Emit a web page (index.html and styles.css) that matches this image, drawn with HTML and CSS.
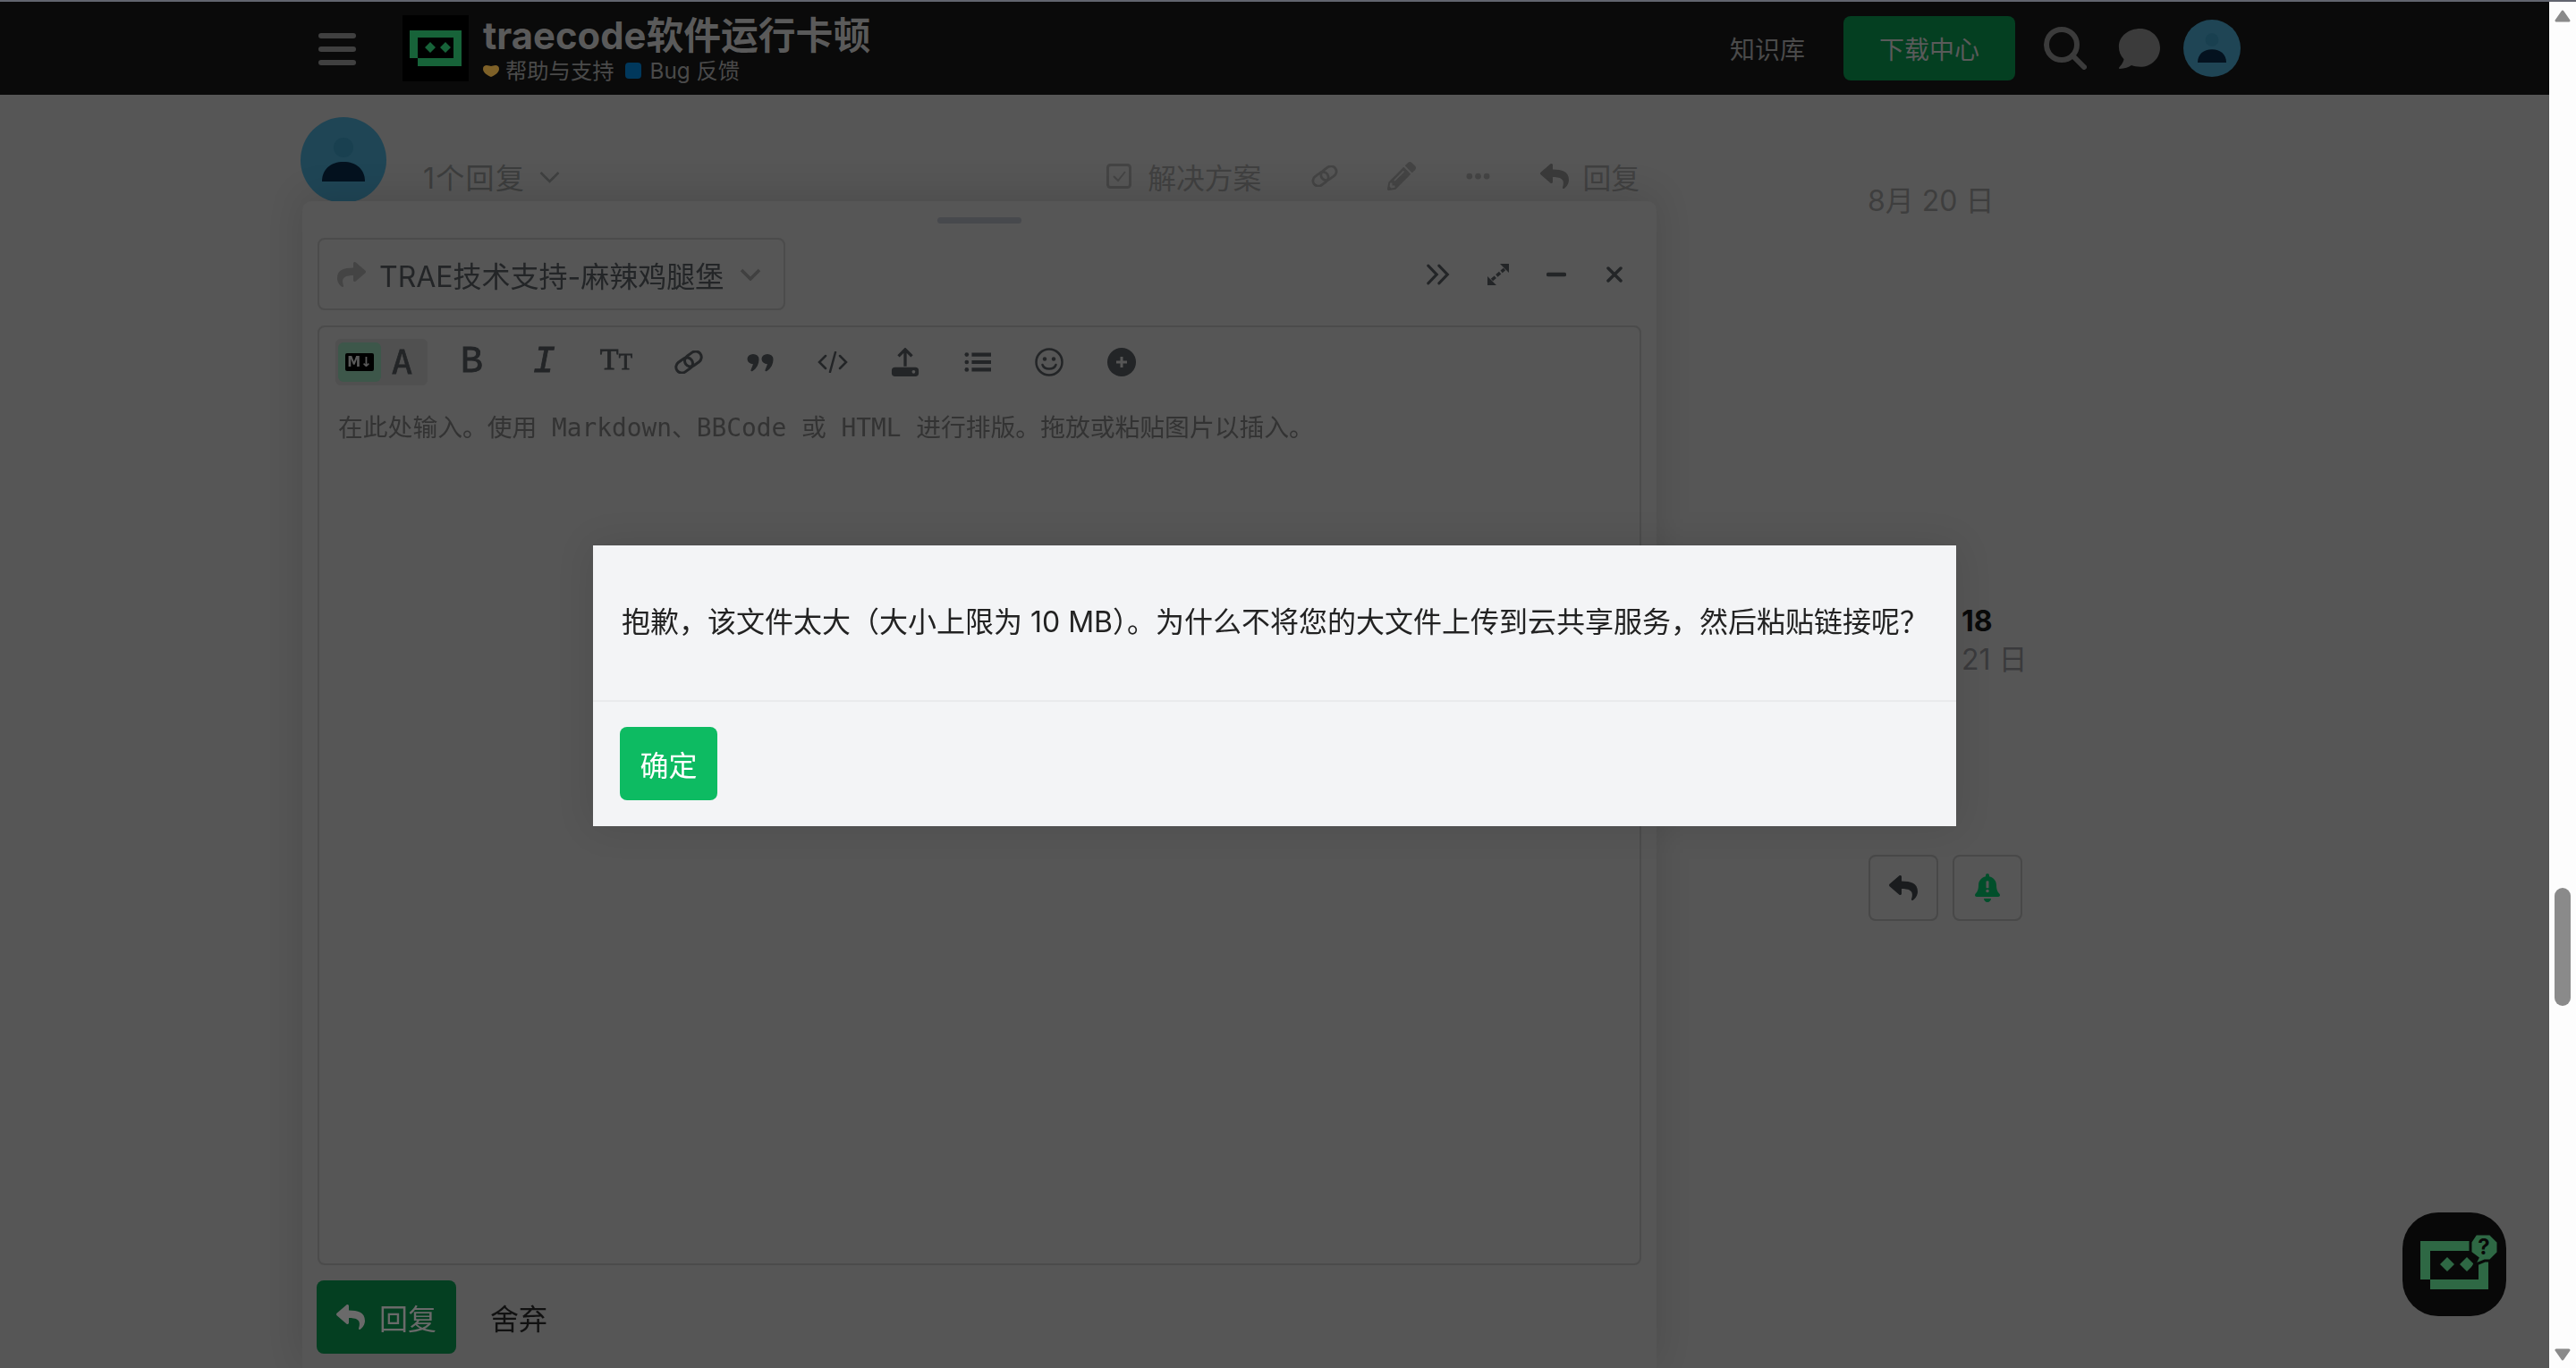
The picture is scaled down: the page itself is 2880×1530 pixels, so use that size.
FILE: index.html
```html
<!DOCTYPE html>
<html lang="zh-CN">
<head>
  <meta charset="UTF-8" />
  <title>traecode软件运行卡顿</title>
  <link rel="stylesheet" href="styles.css">
</head>
<body>
  <svg class="sprite" xmlns="http://www.w3.org/2000/svg">
    <symbol id="i-reply" viewBox="0 0 512 512"><path fill="currentColor" d="M8.309 189.836L184.313 37.851C199.719 24.546 224 35.347 224 56.015v80.053c160.629 1.839 288 34.032 288 186.258 0 61.441-39.581 122.309-83.333 154.132-13.653 9.931-33.111-2.533-28.077-18.631 45.344-145.012-21.507-183.51-176.59-185.742V360c0 20.7-24.3 31.453-39.687 18.164l-176.004-152c-11.071-9.562-11.086-26.753 0-36.328z"/></symbol>
    <symbol id="i-link" viewBox="0 0 32 26"><g transform="rotate(-36 16 13)" fill="none" stroke="currentColor" stroke-width="3"><rect x="0" y="6.500" width="20" height="13" rx="6.500"/><rect x="12" y="6.500" width="20" height="13" rx="6.500"/></g></symbol>
    <symbol id="i-person" viewBox="0 0 96 96"><circle cx="48" cy="34" r="11" fill="#194050"/><path d="M24 72c0-14 10-22 24-22s24 8 24 22z" fill="#04121f"/></symbol>
  </svg>

  <div class="top-line"></div>
  <div class="window">
    <div class="page">
      <header class="site-header">
        <div class="hamburger"><span></span><span></span><span></span></div>
        <svg class="logo" viewBox="0 0 74 74">
          <rect width="74" height="74" fill="#000"/>
          <path fill="#176339" fill-rule="evenodd" d="M8 17H66V57H17V48H8ZM17 25V48H57V25Z"/>
          <path fill="#176339" d="M31 30l6 6-6 6-6-6zM48 30l6 6-6 6-6-6z"/>
        </svg>
        <div class="topic">
          <div class="topic-title">traecode软件运行卡顿</div>
          <div class="topic-crumbs">
            <svg class="crumb-heart" viewBox="0 0 18 14"><path fill="#7e6128" d="M9 14C4 12 0 9 0 5c0-3 2-4 4-4 2 0 4 1 5 1s3-1 5-1c2 0 4 1 4 4 0 4-4 7-9 9z"/></svg>
            <span>帮助与支持</span>
            <i class="crumb-square"></i>
            <span>Bug 反馈</span>
          </div>
        </div>
        <nav class="header-nav">
          <a class="nav-link">知识库</a>
          <a class="nav-btn">下载中心</a>
          <svg class="nav-search" viewBox="0 0 48 48"><circle cx="20" cy="20" r="17" fill="none" stroke="#3b3b3b" stroke-width="6"/><path d="M32 32l13 13" stroke="#3b3b3b" stroke-width="6" stroke-linecap="round"/></svg>
          <svg class="nav-chat" viewBox="0 0 512 480"><path fill="#3b3b3b" d="M276 0C136 0 20 90 20 215c0 60 22 110 60 150C74 410 30 455 22 465c-4 6 0 15 8 15 60 0 110-20 140-42 32 12 68 18 106 18 130 0 236-102 236-228S406 0 276 0z"/></svg>
          <div class="avatar avatar-small"><svg viewBox="0 0 96 96"><use href="#i-person"/></svg></div>
        </nav>
      </header>

      <main class="topic-body">
        <section class="post-row">
          <div class="avatar"><svg viewBox="0 0 96 96"><use href="#i-person"/></svg></div>
          <div class="post-actions">
            <span class="replies">1个回复</span>
            <svg class="replies-caret" viewBox="0 0 24 14"><path d="M2 2l10 10L22 2" fill="none" stroke="#3f4040" stroke-width="2.500"/></svg>
            <div class="action-list">
              <svg class="act-check" viewBox="0 0 28 28"><rect x="1.500" y="1.500" width="25" height="25" rx="3" fill="none" stroke="#444" stroke-width="3"/><path d="M8 14l5 5 8-10" fill="none" stroke="#444" stroke-width="2"/></svg>
              <span class="act-label">解决方案</span>
              <svg class="act-link"><use href="#i-link"/></svg>
              <svg class="act-pencil" viewBox="0 0 512 512"><path fill="#444" d="M497.900 142.100l-46.100 46.100c-4.700 4.700-12.300 4.700-17 0l-111-111c-4.700-4.700-4.700-12.300 0-17l46.100-46.100c18.700-18.700 49.100-18.700 67.900 0l60.100 60.100c18.800 18.700 18.800 49.100 0 67.900zM284.200 99.800L21.600 362.400.4 483.900c-2.900 16.400 11.400 30.600 27.800 27.800l121.500-21.300 262.600-262.600c4.700-4.700 4.700-12.300 0-17l-111-111c-4.800-4.700-12.400-4.700-17.100 0zM124.100 339.900c-5.500-5.500-5.500-14.300 0-19.800l154-154c5.500-5.500 14.300-5.500 19.800 0s5.500 14.300 0 19.800l-154 154c-5.500 5.500-14.300 5.500-19.800 0zM88 424h48v36.300l-64.500 11.300-31.100-31.100L51.700 376H88v48z"/></svg>
              <svg class="act-dots" viewBox="0 0 28 8"><circle cx="4" cy="4" r="3.500" fill="#444"/><circle cx="14" cy="4" r="3.500" fill="#444"/><circle cx="24" cy="4" r="3.500" fill="#444"/></svg>
              <svg class="act-reply"><use href="#i-reply"/></svg>
              <span class="act-label act-label-reply">回复</span>
            </div>
          </div>
        </section>

        <aside class="timeline">
          <div class="tl-date">8月 20 日</div>
          <div class="tl-count">18</div>
          <div class="tl-last">21 日</div>
          <div class="tl-buttons">
            <button class="tl-btn"><svg class="tl-reply"><use href="#i-reply"/></svg></button>
            <button class="tl-btn">
              <svg class="tl-bell" viewBox="0 0 448 512"><path fill="#014f2b" d="M224 512c35.320 0 63.970-28.650 63.970-64H160.030c0 35.350 28.650 64 63.970 64zm215.390-149.710c-19.320-20.760-55.470-51.990-55.470-154.290 0-77.700-54.480-139.900-127.940-155.160V32c0-17.670-14.320-32-31.980-32s-31.980 14.330-31.980 32v20.840C118.560 68.100 64.080 130.300 64.080 208c0 102.300-36.150 133.530-55.470 154.290-6 6.450-8.660 14.160-8.610 21.710.11 16.400 12.980 32 32.100 32h383.800c19.120 0 32-15.600 32.100-32 .05-7.550-2.610-15.270-8.610-21.710z"/><rect x="200" y="130" width="48" height="130" rx="14" fill="#565656"/><circle cx="224" cy="310" r="28" fill="#565656"/></svg>
            </button>
          </div>
        </aside>
      </main>

      <section class="composer">
        <div class="grip"></div>
        <div class="composer-top">
          <div class="reply-to">
            <svg class="share-icon"><use href="#i-reply"/></svg>
            <span>TRAE技术支持-麻辣鸡腿堡</span>
            <svg class="reply-caret" viewBox="0 0 24 14"><path d="M2 2l10 10L22 2" fill="none" stroke="#404040" stroke-width="3.500"/></svg>
          </div>
          <div class="composer-controls">
            <svg class="ctl" viewBox="0 0 28 24"><path d="M2 1.500l10 10.500L2 22.500M15 1.500l10 10.500-10 10.500" fill="none" stroke="#232527" stroke-width="3.500" stroke-linecap="round"/></svg>
            <svg class="ctl" viewBox="0 0 26 24"><path d="M15 0h10v10zM1 24V14l10 10z" fill="#232527"/><path d="M6 18l14-12" stroke="#232527" stroke-width="3.500" stroke-dasharray="5 2"/></svg>
            <svg class="ctl ctl-min" viewBox="0 0 22 6"><path d="M2 3h18" stroke="#232527" stroke-width="4.500" stroke-linecap="round"/></svg>
            <svg class="ctl ctl-x" viewBox="0 0 18 18"><path d="M2 2l14 14M16 2L2 16" stroke="#232527" stroke-width="3.500" stroke-linecap="round"/></svg>
          </div>
        </div>

        <div class="editor">
          <div class="toolbar">
            <div class="mode-toggle">
              <div class="mode-md"><span class="md-mark">M↓</span></div>
              <span class="mode-a">A</span>
            </div>
            <span class="tool tool-b">B</span>
            <span class="tool tool-i">I</span>
            <span class="tool tool-t">T<small>T</small></span>
            <span class="tool"><svg class="tool-link"><use href="#i-link"/></svg></span>
            <span class="tool"><svg class="tool-svg tool-quote" viewBox="0 0 30 24" preserveAspectRatio="none"><path d="M7 1a6.500 6.500 0 0 1 6.500 6.500C13.500 14 11 20 6 23c-1 .5-2-.5-1.500-1.500L7 14A6.500 6.500 0 0 1 7 1zM23 1a6.500 6.500 0 0 1 6.500 6.500C29.500 14 27 20 22 23c-1 .5-2-.5-1.500-1.500L23 14A6.500 6.500 0 0 1 23 1z" fill="#232527"/></svg></span>
            <span class="tool"><svg class="tool-svg tool-code" viewBox="0 0 34 24"><path d="M9 5l-7 7 7 7M25 5l7 7-7 7M20 1l-6 22" fill="none" stroke="#232527" stroke-width="2.500" stroke-linecap="round"/></svg></span>
            <span class="tool"><svg class="tool-svg tool-upload" viewBox="0 0 32 34"><path d="M16 22V3M8 10l8-8 8 8" fill="none" stroke="#232527" stroke-width="3.500"/><rect y="23" width="32" height="11" rx="4" fill="#232527"/><circle cx="26" cy="28.500" r="2" fill="#565656"/></svg></span>
            <span class="tool"><svg class="tool-svg" viewBox="0 0 32 24"><path d="M9 3h23M9 12h23M9 21h23" stroke="#232527" stroke-width="4.500"/><circle cx="3" cy="3" r="2.500" fill="#232527"/><circle cx="3" cy="12" r="2.500" fill="#232527"/><circle cx="3" cy="21" r="2.500" fill="#232527"/></svg></span>
            <span class="tool"><svg class="tool-svg tool-round" viewBox="0 0 32 32"><circle cx="16" cy="16" r="14.500" fill="none" stroke="#232527" stroke-width="2.500"/><circle cx="11" cy="12.500" r="2.200" fill="#232527"/><circle cx="21" cy="12.500" r="2.200" fill="#232527"/><path d="M8.500 19c2 6 13 6 15 0" fill="none" stroke="#232527" stroke-width="2.500" stroke-linecap="round"/></svg></span>
            <span class="tool"><svg class="tool-svg tool-round" viewBox="0 0 32 32"><circle cx="16" cy="16" r="16" fill="#232527"/><path d="M16 10v12M10 16h12" stroke="#565656" stroke-width="3"/></svg></span>
          </div>
          <div class="placeholder">在此处输入。使用 Markdown、BBCode 或 HTML 进行排版。拖放或粘贴图片以插入。</div>
        </div>

        <div class="composer-footer">
          <button class="btn-reply"><svg class="btn-reply-icon"><use href="#i-reply"/></svg>回复</button>
          <a class="discard">舍弃</a>
        </div>
      </section>

      <button class="help-fab">
        <svg viewBox="0 0 116 116">
          <path fill="#2e6844" fill-rule="evenodd" d="M20 32H96V86H31V75H20ZM31 43V75H85V43Z"/>
          <path fill="#2e6844" d="M50 50l8 8-8 8-8-8zM72 50l8 8-8 8-8-8z"/>
          <path fill="#2e6844" stroke="#080808" stroke-width="3" d="M82 24h16l9 9v12l-9 9H92l-12 5 4-8-8-6V33z"/>
          <text x="91" y="47" class="fab-q">?</text>
        </svg>
      </button>

      <div class="modal-wrap">
        <div class="modal">
          <div class="modal-body">抱歉，该文件太大（大小上限为 10 MB）。为什么不将您的大文件上传到云共享服务，然后粘贴链接呢？</div>
          <div class="modal-footer"><button class="btn-ok">确定</button></div>
        </div>
      </div>
    </div>

    <div class="scrollbar">
      <svg class="sb-arrow" viewBox="0 0 18 14"><path d="M9 2L2 12h14z" fill="#8a8a8a" stroke="#8a8a8a" stroke-width="3" stroke-linejoin="round"/></svg>
      <div class="sb-thumb"></div>
      <svg class="sb-arrow sb-arrow-down" viewBox="0 0 18 14"><path d="M9 12L2 2h14z" fill="#8a8a8a" stroke="#8a8a8a" stroke-width="3" stroke-linejoin="round"/></svg>
    </div>
  </div>
</body>
</html>
```

FILE: styles.css
```css
* {
  box-sizing: border-box;
}

html, body {
  margin: 0;
  height: 100%;
  overflow: hidden;
}

body {
  display: flex;
  flex-direction: column;
  font-family: "Inter", "Noto Sans CJK SC", sans-serif;
  background: #565656;
  color: #222;
}

button {
  font-family: inherit;
  border: 0;
  padding: 0;
}

.sprite {
  display: none;
}

.top-line {
  height: 2px;
  background: #62656f;
}

.window {
  flex: 1;
  display: flex;
  min-height: 0;
}

.page {
  flex: 1;
  position: relative;
  min-width: 0;
}

/* header */
.site-header {
  height: 104px;
  background: #0a0a0a;
  display: flex;
  align-items: center;
  padding: 0 345px 0 356px;
}

.hamburger {
  width: 42px;
  display: flex;
  flex-direction: column;
  gap: 9px;
  margin-top: 1px;
}

.hamburger span {
  height: 6px;
  border-radius: 3px;
  background: #404040;
}

.logo {
  width: 74px;
  height: 74px;
  margin-left: 52px;
}

.topic {
  margin-left: 16px;
  margin-top: 2px;
}

.topic-title {
  font-size: 41.800px;
  line-height: 48px;
  font-weight: 700;
  color: #5a5a5a;
  white-space: nowrap;
}

.topic-crumbs {
  display: flex;
  align-items: center;
  font-size: 24.300px;
  line-height: 30px;
  color: #4a4a4a;
  white-space: nowrap;
}

.crumb-heart {
  width: 18px;
  height: 14px;
  margin-right: 7px;
}

.crumb-square {
  width: 18px;
  height: 18px;
  border-radius: 4px;
  background: #01385c;
  margin: 0 9px 0 13px;
}

.header-nav {
  margin-left: auto;
  display: flex;
  align-items: center;
}

.nav-link {
  font-size: 28px;
  color: #4a4a4a;
}

.nav-btn {
  width: 192px;
  height: 72px;
  margin-left: 43px;
  border-radius: 8px;
  background: #043f21;
  color: #5a5a5a;
  font-size: 28px;
  display: flex;
  align-items: center;
  justify-content: center;
}

.nav-search {
  width: 48px;
  height: 48px;
  margin-left: 32px;
}

.nav-chat {
  width: 48px;
  height: 45px;
  margin-left: 34px;
}

.avatar {
  width: 96px;
  height: 96px;
  border-radius: 50%;
  background: #1f4555;
  flex: none;
}

.avatar svg {
  display: block;
  width: 100%;
  height: 100%;
}

.avatar-small {
  width: 64px;
  height: 64px;
  margin-left: 26px;
}

/* post + timeline */
.topic-body {
  display: grid;
  grid-template-columns: 1500px 1fr;
  column-gap: 252px;
  padding: 25px 0 0 336px;
}

.post-row {
  display: flex;
  align-items: flex-start;
}

.post-actions {
  flex: 1;
  display: flex;
  align-items: center;
  height: 32px;
  margin: 50px 0 0 41px;
  padding-right: 3px;
  font-size: 32px;
  color: #404040;
}

.replies {
  color: #3c3d3d;
  font-size: 32px;
  letter-spacing: 1.300px;
}

.replies-caret {
  width: 25px;
  height: 14px;
  margin: 2px 0 0 15px;
}

.action-list {
  margin-left: auto;
  display: flex;
  align-items: center;
}

.act-check {
  width: 28px;
  height: 28px;
}

.act-label {
  margin-left: 18px;
  color: #404040;
  font-size: 31.800px;
}

.act-link {
  width: 30px;
  height: 24px;
  margin-left: 56px;
  color: #444;
}

.act-pencil {
  width: 32px;
  height: 32px;
  margin-left: 55px;
}

.act-dots {
  width: 27px;
  height: 8px;
  margin-left: 56px;
}

.act-reply {
  width: 32px;
  height: 32px;
  margin-left: 56px;
  color: #3a3a3a;
}

.act-label-reply {
  margin-left: 15px;
}

.timeline {
  font-size: 32px;
  line-height: 40px;
}

.tl-date {
  margin-top: 74px;
  color: #3e3e3e;
}

.tl-count {
  margin: 430px 0 0 105px;
  font-weight: 700;
  color: #0a0a0a;
}

.tl-last {
  margin: 3px 0 0 105px;
  color: #3a3a3c;
}

.tl-buttons {
  display: flex;
  gap: 16px;
  margin: 198px 0 0 1px;
}

.tl-btn {
  width: 78px;
  height: 74px;
  background: none;
  border: 2px solid #484848;
  border-radius: 8px;
  display: flex;
  align-items: center;
  justify-content: center;
}

.tl-reply {
  width: 32px;
  height: 32px;
  color: #1a1c1e;
}

.tl-bell {
  width: 28px;
  height: 32px;
}

/* composer */
.composer {
  position: fixed;
  left: 338px;
  top: 225px;
  bottom: 0;
  width: 1514px;
  display: flex;
  flex-direction: column;
  padding: 0 17px;
  background: #565656;
  border-radius: 10px 10px 0 0;
  box-shadow: 0 -6px 40px rgba(0, 0, 0, 0.12);
}

.grip {
  width: 94px;
  height: 7px;
  margin: 18px auto 0;
  border-radius: 4px;
  background: #47494d;
}

.composer-top {
  display: flex;
  align-items: center;
  height: 81px;
  margin-top: 16px;
}

.reply-to {
  width: 523px;
  height: 81px;
  display: flex;
  align-items: center;
  border: 2px solid #4b4b4b;
  border-radius: 8px;
  padding-left: 20px;
  font-size: 32px;
  color: #232527;
}

.share-icon {
  width: 32px;
  height: 32px;
  color: #444;
  transform: scaleX(-1);
  margin-right: 15px;
}

.reply-caret {
  width: 24px;
  height: 14px;
  margin-left: 18px;
}

.composer-controls {
  margin-left: auto;
  display: flex;
  align-items: center;
  gap: 41px;
  margin-right: 21px;
}

.ctl {
  width: 26px;
  height: 24px;
}

.ctl-min {
  width: 22px;
  height: 6px;
}

.ctl-x {
  width: 18px;
  height: 18px;
  margin-left: 4px;
}

.editor {
  flex: 1;
  margin-top: 17px;
  border: 2px solid #4b4b4b;
  border-radius: 8px;
  padding: 13px 18px;
}

.toolbar {
  display: flex;
  align-items: center;
  height: 52px;
}

.mode-toggle {
  width: 103px;
  height: 52px;
  display: flex;
  align-items: center;
  background: #505050;
  border-radius: 6px;
  padding-left: 3px;
  margin-right: 9px;
}

.mode-md {
  width: 48px;
  height: 44px;
  background: #3d574a;
  border-radius: 6px;
  display: flex;
  align-items: center;
  justify-content: center;
}

.md-mark {
  width: 32px;
  height: 20px;
  background: #000;
  border-radius: 2px;
  color: #5a5a5a;
  font-size: 15px;
  font-weight: 700;
  line-height: 20px;
  text-align: center;
  font-family: "DejaVu Sans", sans-serif;
  white-space: nowrap;
}

.mode-a {
  margin-left: 12px;
  font-family: "DejaVu Sans Mono", monospace;
  font-size: 38px;
  line-height: 44px;
  color: #232527;
  -webkit-text-stroke: 0.8px #232527;
}

.tool {
  width: 80.750px;
  height: 52px;
  display: flex;
  align-items: center;
  justify-content: center;
  color: #232527;
  font-family: "Liberation Mono", monospace;
  -webkit-text-stroke: 0.8px #232527;
}

.tool-b {
  font-size: 42px;
}

.tool-i {
  font-size: 42px;
  font-style: italic;
}

.tool-t {
  font-family: "Liberation Serif", serif;
  font-size: 34px;
  align-items: baseline;
  line-height: 46px;
}

.tool-t small {
  font-size: 25px;
}

.tool-link {
  width: 32px;
  height: 26px;
  color: #232527;
}

.tool-svg {
  width: 30px;
  height: 24px;
}

.tool-quote {
  height: 21px;
}

.tool-code {
  width: 34px;
}

.tool-upload {
  width: 32px;
  height: 32px;
}

.tool-round {
  width: 32px;
  height: 32px;
}

.placeholder {
  margin: 28px 0 0 3px;
  font-family: "DejaVu Sans Mono", "Noto Sans CJK SC", monospace;
  font-size: 27.800px;
  line-height: 40px;
  color: #333;
  white-space: nowrap;
}

.composer-footer {
  display: flex;
  align-items: center;
  height: 82px;
  margin: 17px 0 16px -1px;
}

.btn-reply {
  width: 156px;
  height: 82px;
  background: #043f21;
  border-radius: 8px;
  color: #6a6a6a;
  font-size: 32px;
  display: flex;
  align-items: center;
  justify-content: center;
  gap: 16px;
}

.btn-reply-icon {
  width: 32px;
  height: 32px;
  color: #6a6a6a;
}

.discard {
  margin-left: 38px;
  font-size: 32px;
  color: #111;
}

.help-fab {
  position: absolute;
  right: 48px;
  bottom: 58px;
  width: 116px;
  height: 116px;
  border-radius: 40px;
  background: #080808;
}

.help-fab svg {
  display: block;
  width: 100%;
  height: 100%;
}

.fab-q {
  font-size: 24px;
  font-weight: 700;
  fill: #080808;
  text-anchor: middle;
}

/* modal */
.modal-wrap {
  position: fixed;
  left: 0;
  top: 0;
  width: 2850px;
  height: 1534px;
  display: flex;
  align-items: center;
  justify-content: center;
}

.modal {
  width: 1524px;
  height: 314px;
  background: #f3f4f6;
  box-shadow: 0 0 40px rgba(0, 0, 0, 0.1);
  display: flex;
  flex-direction: column;
}

.modal-body {
  height: 175px;
  padding: 65px 0 0 32px;
  font-size: 32px;
  line-height: 42px;
  color: #222;
  border-bottom: 2px solid #e9eaec;
  white-space: nowrap;
}

.modal-footer {
  padding: 28px 30px;
}

.btn-ok {
  display: block;
  width: 109px;
  height: 82px;
  border-radius: 8px;
  background: #0dbb62;
  color: #fff;
  font-size: 32px;
}

/* scrollbar */
.scrollbar {
  width: 30px;
  background: #fdfdfd;
  display: flex;
  flex-direction: column;
  align-items: center;
}

.sb-arrow {
  width: 18px;
  height: 14px;
  margin-top: 9px;
}

.sb-thumb {
  width: 18px;
  height: 132px;
  margin-top: 968px;
  border-radius: 9px;
  background: #8a8a8a;
}

.sb-arrow-down {
  margin-top: auto;
  margin-bottom: 8px;
}
```
